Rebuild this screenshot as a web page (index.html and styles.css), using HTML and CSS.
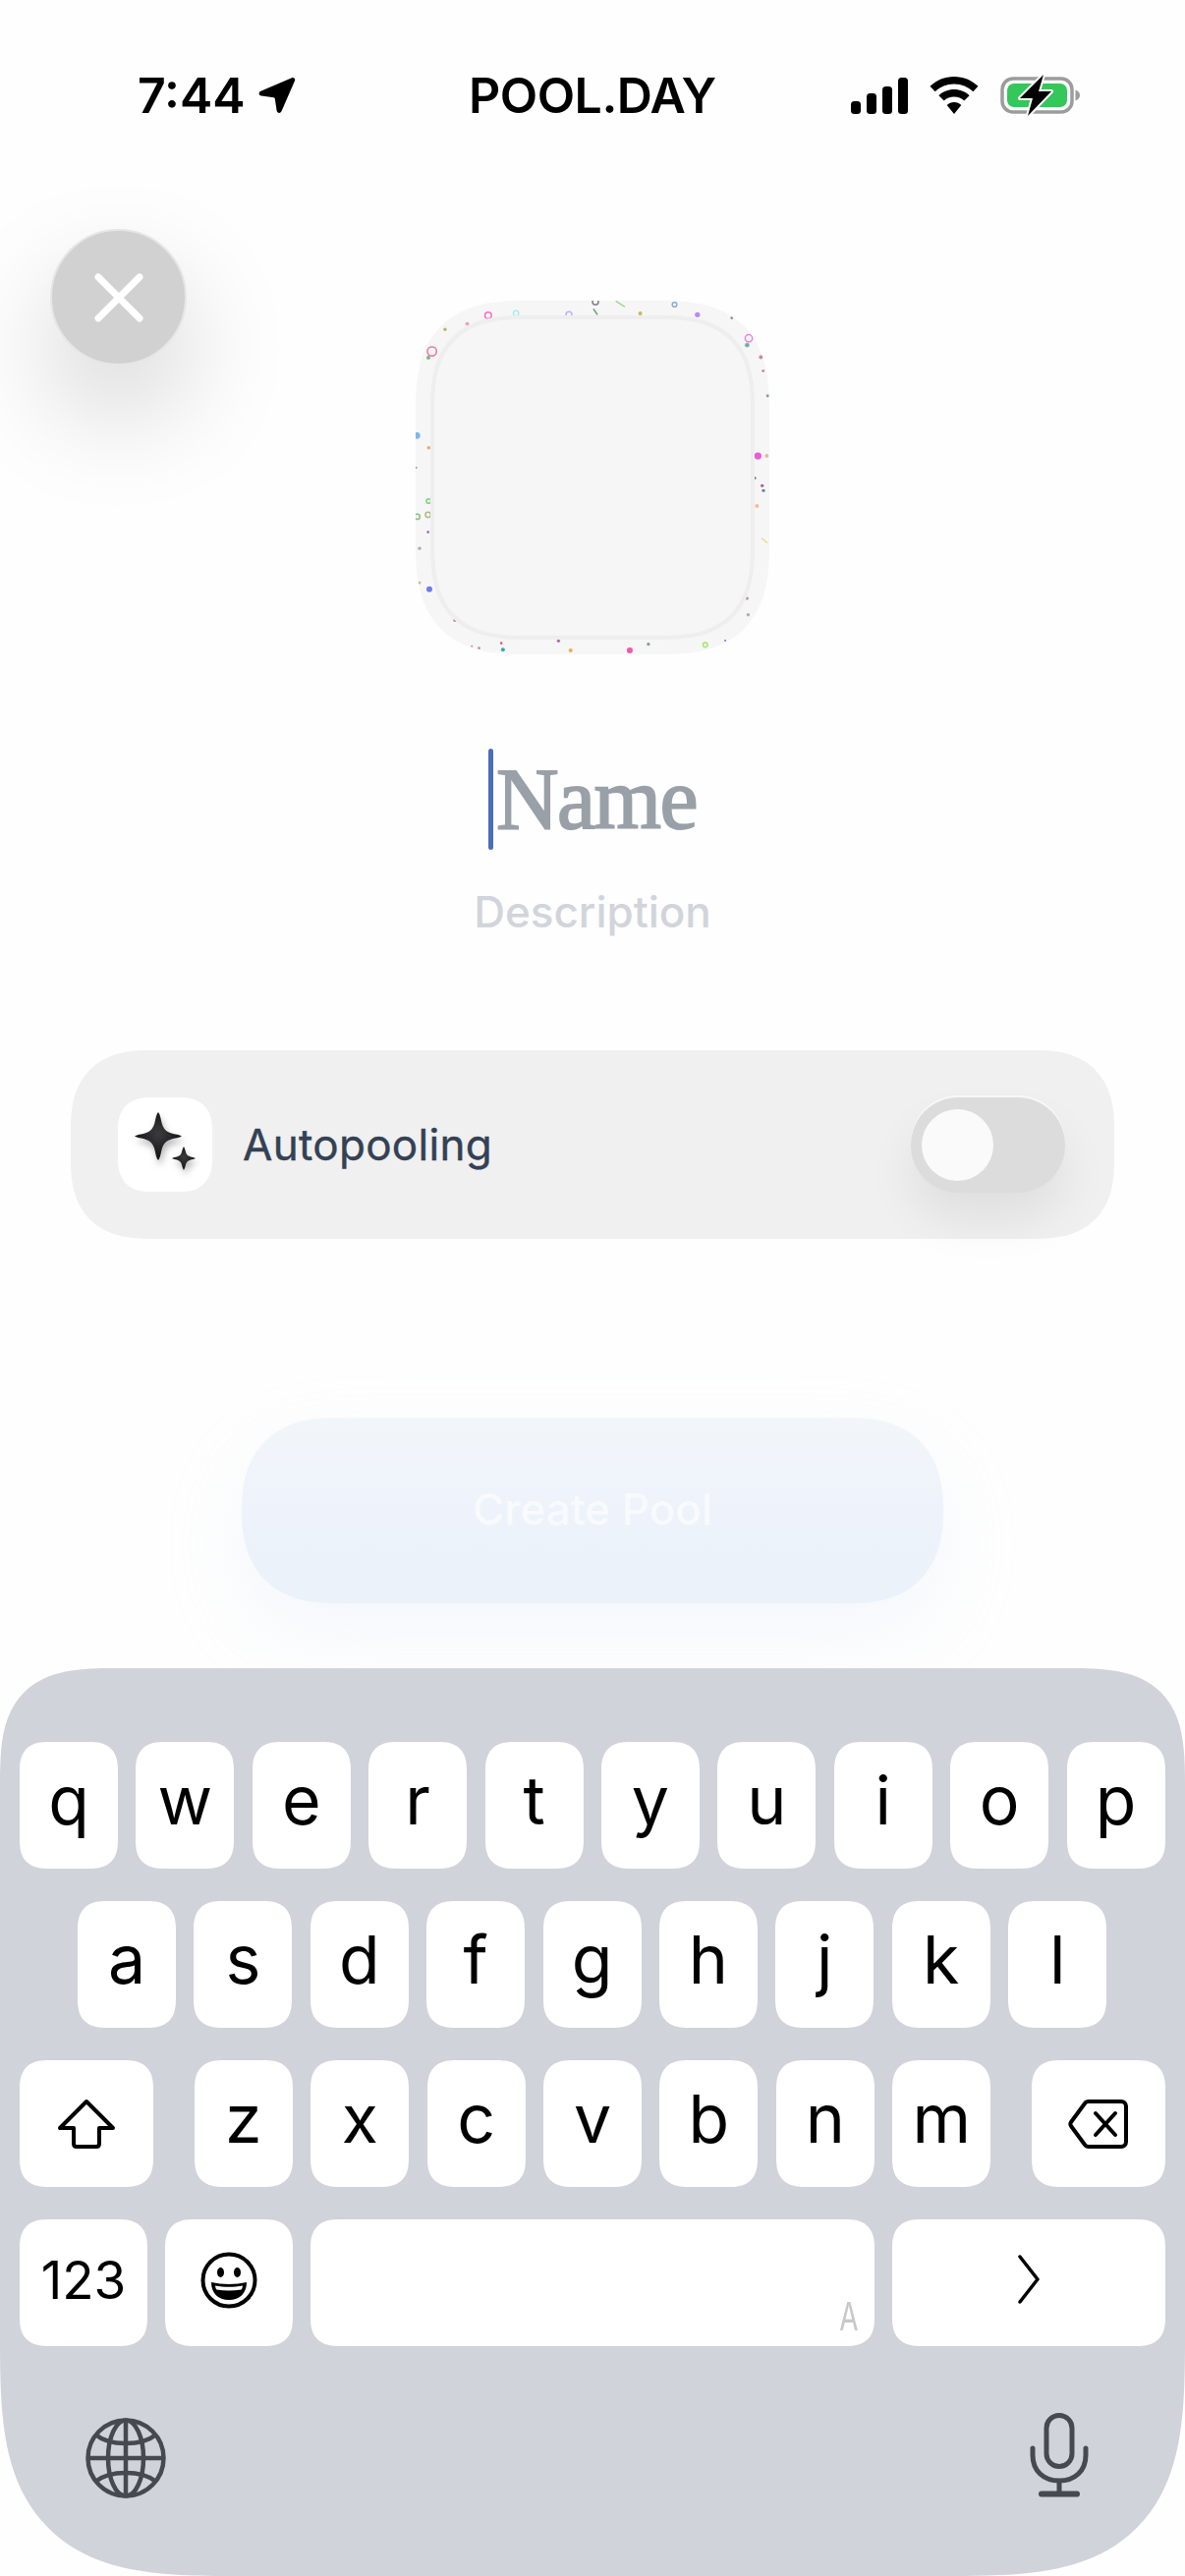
FILE: index.html
```html
<!DOCTYPE html>
<html lang="en">
<head>
    <meta charset="UTF-8">
    <meta name="viewport" content="width=device-width, initial-scale=1.0">
    <title>Pool.day</title>
    <link rel="stylesheet" href="styles.css">
</head>

<body>
    <div class="screen">
        <div class="status">
            <div class="status-left">
                <span class="time">7:44</span>
                <svg class="loc" width="38" height="38" viewBox="0 0 38 38"><path d="M34 1.2c2-.8 3.8 1 3 3L23.600 35c-1.200 2.800-4.600 2.400-5-.6L16.800 22.500c-.1-.8-.6-1.200-1.300-1.300L3 19.600C.2 19.200-.2 16 2.400 14.800z"/></svg>
            </div>
            <span class="brand">POOL.DAY</span>
            <div class="status-right">
                <svg width="58" height="37" viewBox="0 0 58 37"><rect x="0" y="24" width="10" height="13" rx="3.500"/><rect x="16" y="16" width="10" height="21" rx="3.500"/><rect x="32" y="9" width="10" height="28" rx="3.500"/><rect x="48" y="0" width="10" height="37" rx="3.500"/></svg>
                <svg width="50" height="38" viewBox="0 0 50 38"><path d="M25 0C15.500 0 7 3.700 .5 9.800l5.200 5.400C10.800 10.400 17.500 7.500 25 7.500s14.200 2.900 19.300 7.700l5.200-5.400C43 3.700 34.500 0 25 0z"/><path d="M25 13c-6 0-11.500 2.300-15.600 6.200l5.300 5.400C17.400 22 21 20.500 25 20.500s7.600 1.500 10.300 4.100l5.300-5.400C36.500 15.300 31 13 25 13z"/><path d="M25 26c-2.800 0-5.400 1.100-7.300 2.900L25 38l7.300-9.100C30.400 27.100 27.800 26 25 26z"/></svg>
                <svg width="82" height="42" viewBox="0 0 82 42"><rect x="2" y="4" width="71" height="34" rx="11" fill="none" stroke="#9c9c9c" stroke-width="3.500"/><rect x="7" y="9" width="61" height="24" rx="7" fill="#34c759"/><path d="M76.500 15.500c3 1 4.500 3 4.500 5.500s-1.500 4.500-4.500 5.500z" fill="#9c9c9c"/><path d="M44 0 20 24h13l-5 18 24-25H39z" stroke="#fff" stroke-width="4" paint-order="stroke" stroke-linejoin="round"/></svg>
            </div>
        </div>

        <button class="close">
            <svg width="50" height="50" viewBox="0 0 50 50"><path d="M4 4l42 42M46 4 4 46" stroke="#fff" stroke-width="7" stroke-linecap="round"/></svg>
        </button>

        <div class="main">
            <div class="pool-icon">
                <svg class="specks" width="360" height="360" viewBox="68 78 1082 1080">
                    <g fill="none" stroke-width="4.500">
                        <circle cx="290" cy="122" r="10" stroke="#f26fc4"/>
                        <circle cx="375" cy="116" r="8" stroke="#a8ecf0"/>
                        <circle cx="537" cy="120" r="9" stroke="#b5b5ef"/>
                        <circle cx="618" cy="81" r="9" stroke="#7d7d92"/>
                        <circle cx="860" cy="89" r="7" stroke="#8fa9d8"/>
                        <circle cx="118" cy="232" r="14" stroke="#f56f9e"/>
                        <circle cx="1087" cy="192" r="11" stroke="#ec7fe0"/>
                        <circle cx="108" cy="690" r="7" stroke="#7bd772"/>
                        <circle cx="73" cy="738" r="8" stroke="#8ac07c"/>
                        <circle cx="106" cy="732" r="8" stroke="#b0b98a"/>
                        <circle cx="954" cy="1130" r="7" stroke="#a6e860"/>
                        <path d="M680 78l28 18" stroke="#a5d98c"/>
                        <path d="M612 102l12 18" stroke="#6f9a70"/>
                        <path d="M1126 804l18 14" stroke="#ece08a"/>
                    </g>
                    <g>
                        <circle cx="930" cy="120" r="8" fill="#b98df0"/>
                        <circle cx="755" cy="116" r="6" fill="#c2b860"/>
                        <circle cx="158" cy="165" r="5" fill="#b5b56a"/>
                        <circle cx="226" cy="148" r="6" fill="#eba4bd"/>
                        <circle cx="107" cy="251" r="6" fill="#76b87c"/>
                        <circle cx="1082" cy="213" r="7" fill="#6cb3a0"/>
                        <circle cx="1124" cy="250" r="6" fill="#c78a9a"/>
                        <circle cx="1131" cy="292" r="4" fill="#b6799a"/>
                        <circle cx="1145" cy="368" r="5" fill="#7aa59b"/>
                        <circle cx="1035" cy="130" r="4" fill="#a87f9a"/>
                        <circle cx="72" cy="490" r="10" fill="#7db7ee"/>
                        <circle cx="108" cy="527" r="5" fill="#e8a56e"/>
                        <circle cx="70" cy="588" r="3" fill="#6cc35a"/>
                        <circle cx="106" cy="785" r="4" fill="#a861b8"/>
                        <circle cx="80" cy="835" r="5" fill="#b8a0c0"/>
                        <circle cx="80" cy="940" r="4" fill="#c8c080"/>
                        <circle cx="110" cy="960" r="9" fill="#6b7fe8"/>
                        <circle cx="1115" cy="552" r="11" fill="#ea5cd8"/>
                        <circle cx="1142" cy="552" r="6" fill="#eab8a8"/>
                        <circle cx="1106" cy="620" r="4" fill="#8a70c0"/>
                        <circle cx="1128" cy="643" r="5" fill="#b0609a"/>
                        <circle cx="1132" cy="658" r="5" fill="#7480a0"/>
                        <circle cx="1112" cy="705" r="6" fill="#f4b8a0"/>
                        <circle cx="1082" cy="988" r="5" fill="#c090a8"/>
                        <circle cx="1085" cy="1038" r="5" fill="#c8a0b8"/>
                        <circle cx="188" cy="1055" r="5" fill="#b890a8"/>
                        <circle cx="330" cy="1125" r="4" fill="#e85a80"/>
                        <circle cx="335" cy="1145" r="6" fill="#3fa8a8"/>
                        <circle cx="505" cy="1118" r="5" fill="#b0709a"/>
                        <circle cx="542" cy="1147" r="6" fill="#eab050"/>
                        <circle cx="723" cy="1147" r="9" fill="#f05aa8"/>
                        <circle cx="780" cy="1128" r="5" fill="#8a9a98"/>
                        <circle cx="1015" cy="1117" r="3" fill="#5a7ae8"/>
                        <circle cx="262" cy="1140" r="4" fill="#b890b0"/>
                        <circle cx="240" cy="1134" r="3" fill="#b890b0"/>
                    </g>
                </svg>
                <div class="pool-icon-inner"></div>
            </div>

            <div class="name-row">
                <span class="caret"></span>
                <span class="name">Name</span>
            </div>
            <div class="description">Description</div>

            <div class="auto-card">
                <div class="sparkle-tile">
                    <svg class="sparkle" width="72" height="72" viewBox="0 0 72 72">
                        <defs>
                            <radialGradient id="star" cx="50%" cy="45%" r="55%">
                                <stop offset="0" stop-color="#3c3c3e"/>
                                <stop offset="1" stop-color="#111112"/>
                            </radialGradient>
                            <filter id="soft" x="-30%" y="-30%" width="170%" height="170%">
                                <feDropShadow dx="2" dy="5" stdDeviation="3.500" flood-color="#000" flood-opacity=".28"/>
                            </filter>
                        </defs>
                        <g filter="url(#soft)" fill="url(#star)">
                            <path d="M29 0c1.800 2 2.500 6 3.500 10.500 1.500 6 4.500 9.500 10 11 3.500 1 8 1.500 10.500 3-2.500 1.500-7 2-10.500 3-5.500 1.500-8.500 5-10 11C31.500 43 30.800 47 29 49c-1.800-2-2.500-6-3.500-10.500-1.500-6-4.500-9.500-10-11-3.500-1-8-1.500-10.500-3 2.500-1.500 7-2 10.500-3 5.500-1.500 8.500-5 10-11C26.500 6 27.200 2 29 0z"/>
                            <path d="M55 35c1 1.500 1.500 3.500 2 5.500.7 2.800 2 4 4.500 4.800 2 .6 4 1 5.500 1.700-1.500.7-3.500 1.100-5.500 1.700-2.500.8-3.800 2-4.500 4.800-.5 2-1 4-2 5.500-1-1.500-1.500-3.500-2-5.500-.7-2.800-2-4-4.500-4.800-2-.6-4-1-5.500-1.700 1.500-.7 3.500-1.100 5.500-1.700 2.500-.8 3.800-2 4.500-4.800.5-2 1-4 2-5.500z"/>
                        </g>
                    </svg>
                </div>
                <span class="auto-label">Autopooling</span>
                <div class="toggle"><span class="knob"></span></div>
            </div>

            <button class="create">Create Pool</button>
        </div>

        <div class="keyboard">
            <div class="row">
                <div class="key">q</div><div class="key">w</div><div class="key">e</div><div class="key">r</div><div class="key">t</div>
                <div class="key">y</div><div class="key">u</div><div class="key">i</div><div class="key">o</div><div class="key">p</div>
            </div>
            <div class="row row-mid">
                <div class="key">a</div><div class="key">s</div><div class="key">d</div><div class="key">f</div><div class="key">g</div>
                <div class="key">h</div><div class="key">j</div><div class="key">k</div><div class="key">l</div>
            </div>
            <div class="row row-split">
                <div class="key key-side">
                    <svg width="60" height="52" viewBox="0 0 60 52"><path d="M30 3 3 30h14v16c0 2 1 3 3 3h20c2 0 3-1 3-3V30h14z" fill="none" stroke="#000" stroke-width="4" stroke-linejoin="round"/></svg>
                </div>
                <div class="letters">
                    <div class="key">z</div><div class="key">x</div><div class="key">c</div><div class="key">v</div>
                    <div class="key">b</div><div class="key">n</div><div class="key">m</div>
                </div>
                <div class="key key-side">
                    <svg width="62" height="52" viewBox="0 0 62 52"><path d="M21 3h33c3 0 5 2 5 5v36c0 3-2 5-5 5H21c-2 0-3-.5-4-2L3 28c-1-1.500-1-2.500 0-4L17 5c1-1.500 2-2 4-2z" fill="none" stroke="#000" stroke-width="4" stroke-linejoin="round"/><path d="M28 15l20 22M48 15 28 37" stroke="#000" stroke-width="4" stroke-linecap="round"/></svg>
                </div>
            </div>
            <div class="row row-bottom">
                <div class="key key-123">123</div>
                <div class="key key-emoji">
                    <svg width="58" height="58" viewBox="0 0 58 58">
                        <circle cx="29" cy="29" r="26.500" fill="none" stroke="#000" stroke-width="4"/>
                        <ellipse cx="20.500" cy="21" rx="3.500" ry="5"/>
                        <ellipse cx="37.500" cy="21" rx="3.500" ry="5"/>
                        <path d="M11 31c11 2.500 25 2.500 36 0 0 11-7 18-18 18s-18-7-18-18z"/>
                        <path d="M15 34.500c9 1.800 19 1.800 28 0-.3 2-.7 3-1.300 4-8.500 1.200-17 1.200-25.400 0-.6-1-1-2-1.300-4z" fill="#fff"/>
                    </svg>
                </div>
                <div class="key key-space"><span class="space-hint">A</span></div>
                <div class="key key-next">
                    <svg width="24" height="50" viewBox="0 0 24 50"><path d="M3 2l18 23L3 48" fill="none" stroke="#000" stroke-width="3.500" stroke-linecap="round" stroke-linejoin="round"/></svg>
                </div>
            </div>
            <div class="kb-tools">
                <svg class="globe" width="82" height="82" viewBox="0 0 82 82" fill="none" stroke="#464a50" stroke-width="4.500">
                    <circle cx="41" cy="41" r="38.500"/>
                    <ellipse cx="41" cy="41" rx="18" ry="38.500"/>
                    <path d="M41 2.500v77M2.500 41h77"/>
                    <path d="M10 17c8 6.500 19 9 31 9s23-2.500 31-9M10 65c8-6.500 19-9 31-9s23 2.500 31 9"/>
                </svg>
                <svg width="60" height="86" viewBox="0 0 60 86" fill="none" stroke="#464a50" stroke-width="5">
                    <rect x="17" y="2.500" width="26" height="52" rx="13"/>
                    <path d="M3 36v7c0 16 11 26 27 26s27-10 27-26v-7" stroke-linecap="round"/>
                    <path d="M30 69v13"/>
                    <path d="M12 82.500h36" stroke-width="6" stroke-linecap="round"/>
                </svg>
            </div>
        </div>
    </div>
</body>
</html>
```

FILE: styles.css
```css
* {
    box-sizing: border-box;
}

body {
    margin: 0;
    background: #fff;
    font-family: Inter, "Noto Sans", sans-serif;
}

.screen {
    position: relative;
    width: 1206px;
    height: 2622px;
    overflow: hidden;
    display: flex;
    flex-direction: column;
    background: #fefefe;
}

/* status bar */
.status {
    display: grid;
    grid-template-columns: 337px auto 1fr;
    align-items: center;
    height: 50px;
    margin-top: 72px;
    padding: 0 106px 0 140px;
    color: #000;
}

.status-left {
    display: flex;
    align-items: center;
    gap: 13px;
}

.time,
.brand {
    font-size: 50px;
    line-height: 50px;
    font-weight: 600;
}

.brand {
    letter-spacing: -0.5px;
}

.status-right {
    display: flex;
    align-items: center;
    justify-content: flex-end;
    gap: 22px;
}

.status svg {
    display: block;
}

/* floating close button */
.close {
    position: absolute;
    left: 51px;
    top: 233px;
    width: 139px;
    height: 139px;
    padding: 0;
    display: flex;
    align-items: center;
    justify-content: center;
    background: #d1d1d1;
    border: 2px solid #e6e6e6;
    border-radius: 50%;
    box-shadow: 0 50px 110px rgba(0, 0, 0, 0.17);
}

.main {
    display: flex;
    flex-direction: column;
    align-items: center;
}

.pool-icon {
    position: relative;
    width: 360px;
    height: 360px;
    margin-top: 184px;
    padding: 15px;
    background: #f6f6f6;
    border-radius: 112px;
    corner-shape: superellipse(1.4);
    overflow: hidden;
}

.specks {
    position: absolute;
    left: 0;
    top: 0;
}

.pool-icon-inner {
    position: relative;
    width: 330px;
    height: 330px;
    background: #f6f6f6;
    border: 4px solid #eeeeee;
    border-radius: 96px;
    corner-shape: superellipse(1.4);
}

.name-row {
    display: flex;
    align-items: center;
    gap: 3px;
    height: 103px;
    margin-top: 96px;
}

.caret {
    width: 5px;
    height: 103px;
    background: #4a6fb8;
    border-radius: 3px;
}

.name {
    font-family: "Liberation Serif", serif;
    font-size: 88px;
    line-height: 103px;
    letter-spacing: -1.5px;
    color: #9aa0a8;
    -webkit-text-stroke: 1.8px #9aa0a8;
}

.description {
    margin-top: 33px;
    font-size: 44px;
    line-height: 60px;
    font-weight: 500;
    color: #d1d5db;
}

.auto-card {
    display: flex;
    align-items: center;
    width: 1062px;
    height: 192px;
    margin-top: 111px;
    padding: 0 50px 0 48px;
    background: #f0f0f0;
    border-radius: 80px;
    corner-shape: superellipse(1.3);
}

.sparkle-tile {
    display: flex;
    align-items: center;
    justify-content: center;
    width: 96px;
    height: 96px;
    background: #fff;
    border-radius: 34px;
    corner-shape: superellipse(1.3);
}

.sparkle {
    transform: translateY(3px);
}

.auto-label {
    flex: 1;
    margin-left: 31px;
    font-size: 44px;
    font-weight: 400;
    letter-spacing: 0.3px;
    color: #334155;
    -webkit-text-stroke: 0.4px #334155;
}

.toggle {
    display: flex;
    align-items: center;
    width: 157px;
    height: 97px;
    padding-left: 11px;
    background: #dcdcdc;
    border-radius: 48px;
    box-shadow: 0 -2px 0 #f8f8f8, 0 28px 50px rgba(0, 0, 0, 0.07);
}

.knob {
    width: 73px;
    height: 73px;
    background: #fafafa;
    border-radius: 50%;
}

.create {
    width: 714px;
    height: 189px;
    margin-top: 182px;
    padding: 0 0 4px;
    font-family: inherit;
    font-size: 44px;
    font-weight: 500;
    color: #f8fafd;
    background: linear-gradient(#f2f6fa, #eef3fb 50%, #ebf2f9);
    border: none;
    border-radius: 94px;
    corner-shape: superellipse(1.25);
    box-shadow: 0 34px 80px rgba(200, 215, 240, 0.18);
}

/* keyboard */
.keyboard {
    display: flex;
    flex-direction: column;
    gap: 33px;
    height: 924px;
    margin-top: 66px;
    padding: 75px 20px 0;
    background: #d0d3da;
    border-radius: 120px 120px 240px 240px;
    corner-shape: superellipse(1.6);
}

.row {
    display: flex;
    gap: 18.4px;
    height: 129px;
}

.row-mid {
    padding-left: 59px;
}

.row-split {
    justify-content: space-between;
}

.row-bottom {
    gap: 18px;
}

.letters {
    display: flex;
    gap: 18.4px;
}

.key {
    display: flex;
    align-items: center;
    justify-content: center;
    width: 100px;
    height: 129px;
    padding-bottom: 12px;
    font-size: 68px;
    font-weight: 400;
    color: #000;
    background: #fff;
    border-radius: 30px;
    corner-shape: superellipse(1.4);
}

.key-side {
    width: 136px;
    padding-bottom: 0;
}

.key-123 {
    width: 130px;
    padding-bottom: 6px;
    font-size: 53px;
}

.key-emoji {
    width: 130px;
    padding-bottom: 6px;
}

.key-space {
    flex: 1;
    align-items: flex-end;
    justify-content: flex-end;
    padding: 0 12px 10px 0;
}

.space-hint {
    font-size: 40px;
    line-height: 40px;
    color: #c8c8c8;
    transform: scaleX(0.7);
}

.key-next {
    width: 278px;
    padding: 0 0 8px 0;
}

.kb-tools {
    display: flex;
    justify-content: space-between;
    align-items: flex-start;
    padding: 35px 78px 0 67px;
}

.globe {
    margin-top: 5px;
}
```
